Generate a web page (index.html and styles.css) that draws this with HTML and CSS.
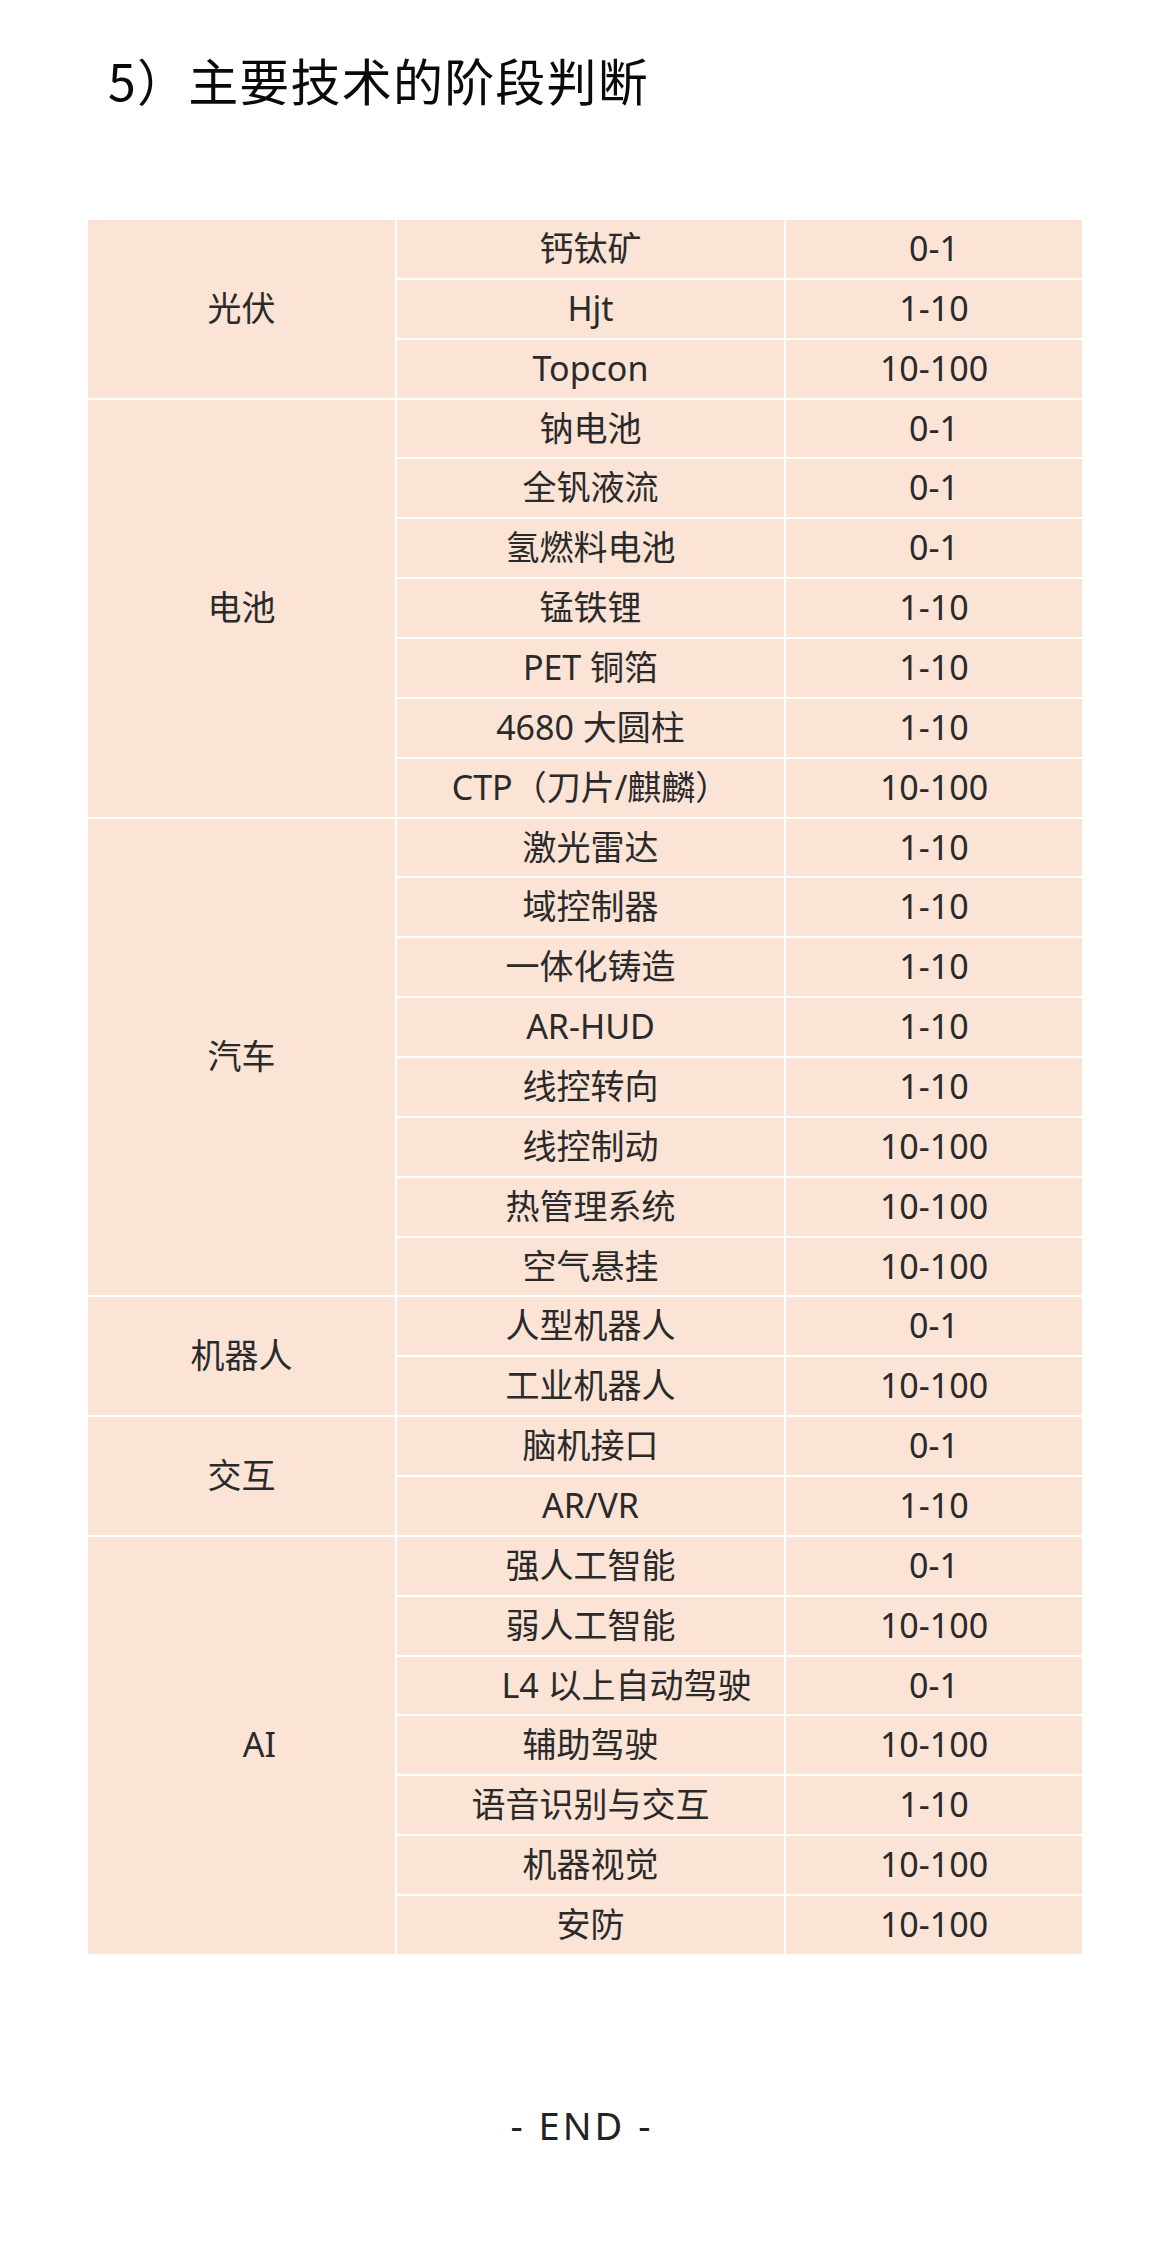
FILE: index.html
```html
<!DOCTYPE html>
<html lang="zh-CN">
<head>
<meta charset="utf-8">
<title>主要技术的阶段判断</title>
<link rel="stylesheet" href="styles.css">
</head>
<body>
<main class="page">
  <h1 class="title">5）主要技术的阶段判断</h1>
  <table class="stages">
    <colgroup>
      <col class="c-field">
      <col class="c-tech">
      <col class="c-stage">
    </colgroup>
    <tbody>
      <tr><td rowspan="3">光伏</td><td>钙钛矿</td><td>0-1</td></tr>
      <tr><td>Hjt</td><td>1-10</td></tr>
      <tr><td>Topcon</td><td>10-100</td></tr>

      <tr><td rowspan="7">电池</td><td>钠电池</td><td>0-1</td></tr>
      <tr><td>全钒液流</td><td>0-1</td></tr>
      <tr><td>氢燃料电池</td><td>0-1</td></tr>
      <tr><td>锰铁锂</td><td>1-10</td></tr>
      <tr><td>PET 铜箔</td><td>1-10</td></tr>
      <tr><td>4680 大圆柱</td><td>1-10</td></tr>
      <tr><td>CTP（刀片/麒麟）</td><td>10-100</td></tr>

      <tr><td rowspan="8">汽车</td><td>激光雷达</td><td>1-10</td></tr>
      <tr><td>域控制器</td><td>1-10</td></tr>
      <tr><td>一体化铸造</td><td>1-10</td></tr>
      <tr><td>AR-HUD</td><td>1-10</td></tr>
      <tr><td>线控转向</td><td>1-10</td></tr>
      <tr><td>线控制动</td><td>10-100</td></tr>
      <tr><td>热管理系统</td><td>10-100</td></tr>
      <tr><td>空气悬挂</td><td>10-100</td></tr>

      <tr><td rowspan="2">机器人</td><td>人型机器人</td><td>0-1</td></tr>
      <tr><td>工业机器人</td><td>10-100</td></tr>

      <tr><td rowspan="2">交互</td><td>脑机接口</td><td>0-1</td></tr>
      <tr><td>AR/VR</td><td>1-10</td></tr>

      <tr><td rowspan="7" class="shift-ai">AI</td><td>强人工智能</td><td>0-1</td></tr>
      <tr><td>弱人工智能</td><td>10-100</td></tr>
      <tr><td class="shift-l4">L4 以上自动驾驶</td><td>0-1</td></tr>
      <tr><td>辅助驾驶</td><td>10-100</td></tr>
      <tr><td>语音识别与交互</td><td>1-10</td></tr>
      <tr><td>机器视觉</td><td>10-100</td></tr>
      <tr><td>安防</td><td>10-100</td></tr>
    </tbody>
  </table>
  <p class="end">- END -</p>
</main>
</body>
</html>
```

FILE: styles.css
```css
html, body {
  margin: 0;
  padding: 0;
  background: #ffffff;
}

.page {
  width: 1170px;
  height: 2244px;
  box-sizing: border-box;
  padding: 44px 0 0 0;
  font-family: "Noto Sans", "Noto Sans CJK SC", sans-serif;
  color: #222222;
}

.title {
  margin: 0 0 104px 0;
  padding-left: 108px;
  font-family: "Noto Sans CJK SC", sans-serif;
  font-weight: 400;
  font-size: 50px;
  line-height: 70px;
  letter-spacing: 1.2px;
  color: #0a0a0a;
}

.stages {
  margin-left: 86px;
  width: 996px;
  table-layout: fixed;
  border-collapse: collapse;
  font-family: "Noto Sans", "Noto Sans CJK SC", sans-serif;
  font-size: 34px;
  color: #2a2a2a;
}

.c-field { width: 309px; }
.c-tech { width: 389px; }
.c-stage { width: 298px; }

.stages tr {
  height: 59.86px;
}

.stages td {
  padding: 0 0 2px 0;
  border: 2px solid #ffffff;
  background: #fbe3d6;
  text-align: center;
  vertical-align: middle;
  line-height: 40px;
  white-space: nowrap;
}

.stages td.shift-ai {
  padding-left: 36px;
}

.stages td.shift-l4 {
  padding-left: 72px;
}

.end {
  margin: 143px 0 0 0;
  padding-right: 6px;
  text-align: center;
  font-family: "Noto Sans", sans-serif;
  font-size: 38px;
  line-height: 53px;
  letter-spacing: 3px;
  color: #222222;
}
```
